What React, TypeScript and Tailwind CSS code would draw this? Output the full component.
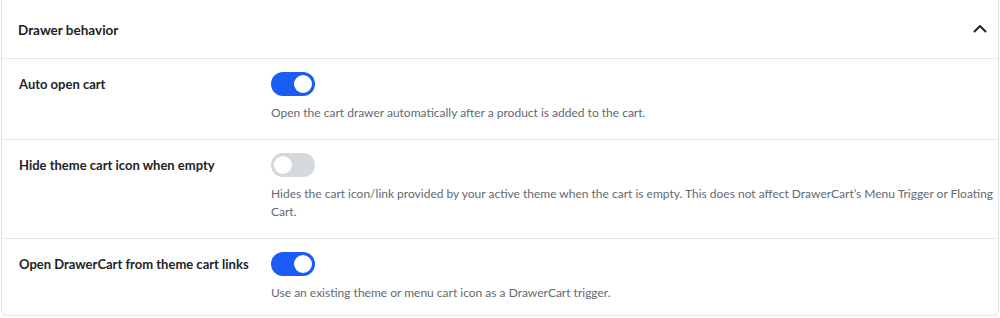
import React, { useState } from "react";

function Toggle({ on, onClick }: { on: boolean; onClick: () => void }) {
  return (
    <button
      type="button"
      onClick={onClick}
      className={
        "relative inline-flex h-[24px] w-[44px] shrink-0 items-center rounded-full " +
        (on ? "bg-[#1a5cf5]" : "bg-[#d5d8dd]")
      }
    >
      <span
        className={
          "absolute top-[3px] h-[18px] w-[18px] rounded-full bg-white " +
          (on ? "left-[23px]" : "left-[3px]")
        }
      />
    </button>
  );
}

const rows = [
  {
    label: "Auto open cart",
    desc: "Open the cart drawer automatically after a product is added to the cart.",
    on: true,
  },
  {
    label: "Hide theme cart icon when empty",
    desc: "Hides the cart icon/link provided by your active theme when the cart is empty. This does not affect DrawerCart\u2019s Menu Trigger or Floating Cart.",
    on: false,
  },
  {
    label: "Open DrawerCart from theme cart links",
    desc: "Use an existing theme or menu cart icon as a DrawerCart trigger.",
    on: true,
  },
];

export default function App() {
  const [state, setState] = useState(rows.map((r) => r.on));
  return (
    <div
      className="w-[1000px] h-[318px] bg-white"
      style={{ fontFamily: 'Lato, "Noto Sans", sans-serif' }}
    >
      <div className="mx-[1px] h-[316px] rounded-b-[6px] border border-t-0 border-[#e3e5e8] bg-white">
        <div className="flex h-[59px] items-center justify-between border-b border-[#e8e9ec] pl-[16px] pr-[10px]">
          <div className="pt-[3px] text-[13.5px] font-bold text-[#1d2327]">Drawer behavior</div>
          <svg width="16" height="16" viewBox="0 0 16 16" fill="none">
            <path d="M2.5 10.5 L8 5 L13.5 10.5" stroke="#1d2327" strokeWidth="2" strokeLinecap="round" strokeLinejoin="round" />
          </svg>
        </div>
        {rows.map((r, i) => (
          <div
            key={i}
            className={
              "flex pl-[17px] pt-[13px] " +
              (i < rows.length - 1 ? "border-b border-[#e8e9ec] pb-[17px]" : "pb-[16px]")
            }
          >
            <div className="w-[252px] shrink-0 pt-[3px] text-[13px] font-bold leading-[18px] text-[#1d2327]">
              {r.label}
            </div>
            <div className="flex max-w-[726px] flex-col gap-[8px]">
              <Toggle
                on={state[i]}
                onClick={() => setState((s) => s.map((v, j) => (j === i ? !v : v)))}
              />
              <div className="text-[12px] leading-[18px] text-[#646970]">{r.desc}</div>
            </div>
          </div>
        ))}
      </div>
    </div>
  );
}
